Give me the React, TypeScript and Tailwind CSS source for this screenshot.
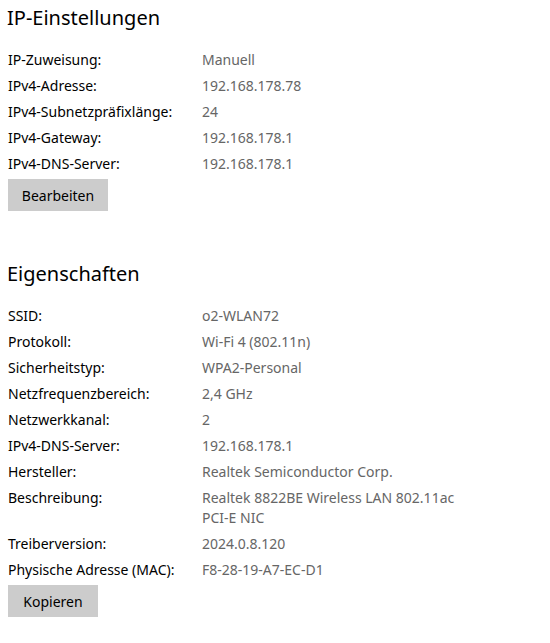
import React from "react";

type Row = { label: string; value: string };

const ipRows: Row[] = [
  { label: "IP-Zuweisung:", value: "Manuell" },
  { label: "IPv4-Adresse:", value: "192.168.178.78" },
  { label: "IPv4-Subnetzpräfixlänge:", value: "24" },
  { label: "IPv4-Gateway:", value: "192.168.178.1" },
  { label: "IPv4-DNS-Server:", value: "192.168.178.1" },
];

const propRows: Row[] = [
  { label: "SSID:", value: "o2-WLAN72" },
  { label: "Protokoll:", value: "Wi-Fi 4 (802.11n)" },
  { label: "Sicherheitstyp:", value: "WPA2-Personal" },
  { label: "Netzfrequenzbereich:", value: "2,4 GHz" },
  { label: "Netzwerkkanal:", value: "2" },
  { label: "IPv4-DNS-Server:", value: "192.168.178.1" },
  { label: "Hersteller:", value: "Realtek Semiconductor Corp." },
  { label: "Beschreibung:", value: "Realtek 8822BE Wireless LAN 802.11ac PCI-E NIC" },
  { label: "Treiberversion:", value: "2024.0.8.120" },
  { label: "Physische Adresse (MAC):", value: "F8-28-19-A7-EC-D1" },
];

function InfoList({ rows }: { rows: Row[] }) {
  return (
    <div className="flex flex-col gap-[6px]">
      {rows.map((r) => (
        <div key={r.label} className="flex text-[14px] leading-5">
          <div className="w-[194px] shrink-0 text-black">{r.label}</div>
          <div className="w-[262px] text-[#666666]">{r.value}</div>
        </div>
      ))}
    </div>
  );
}

export default function App() {
  return (
    <div
      className="min-h-screen bg-white px-2 pt-1 text-black"
      style={{ fontFamily: '"Segoe UI", "Noto Sans", sans-serif' }}
    >
      <h2 className="-ml-px text-[20px] leading-7 font-normal">IP-Einstellungen</h2>
      <div className="mt-[18px]">
        <InfoList rows={ipRows} />
      </div>
      <button className="mt-[5px] h-8 w-[100px] bg-[#cccccc] text-[14px] text-black">
        Bearbeiten
      </button>

      <h2 className="-ml-px mt-[49px] text-[20px] leading-7 font-normal">Eigenschaften</h2>
      <div className="mt-[18px]">
        <InfoList rows={propRows} />
      </div>
      <button className="mt-[5px] h-8 w-[90px] bg-[#cccccc] text-[14px] text-black">
        Kopieren
      </button>
    </div>
  );
}
